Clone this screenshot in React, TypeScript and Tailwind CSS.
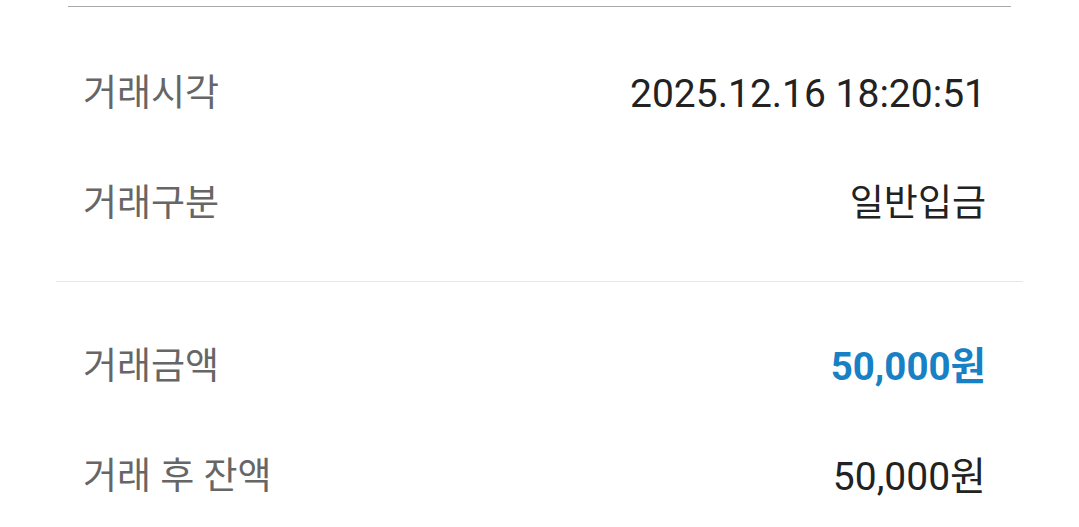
import React from "react";

const font = { fontFamily: "Roboto, 'Noto Sans CJK KR', sans-serif" };

function Row({ label, value, valueClass }: { label: string; value: string; valueClass: string }) {
  return (
    <div className="flex h-[110px] items-center justify-between pl-[83px] pr-[93px]">
      <span className="text-[37px] text-[#666666]">{label}</span>
      <span className={valueClass}>{value}</span>
    </div>
  );
}

export default function App() {
  return (
    <div className="w-full h-[527px] bg-white overflow-hidden" style={font}>
      <div className="pt-[6px]">
        <div className="mx-[68px] h-px bg-[#a9a9a9]" />
      </div>
      <div className="mt-[32px]">
        <Row label="거래시각" value="2025.12.16 18:20:51" valueClass="text-[39px] text-[#222222]" />
        <Row label="거래구분" value="일반입금" valueClass="text-[37px] text-[#222222]" />
      </div>
      <div className="mt-[22px] ml-[56px] w-[967px] h-px bg-[#e6e6e6]" />
      <div className="mt-[30px]">
        <Row label="거래금액" value="50,000원" valueClass="text-[38.5px] font-bold text-[#1880c4]" />
        <Row label="거래 후 잔액" value="50,000원" valueClass="text-[39px] text-[#222222]" />
      </div>
    </div>
  );
}
